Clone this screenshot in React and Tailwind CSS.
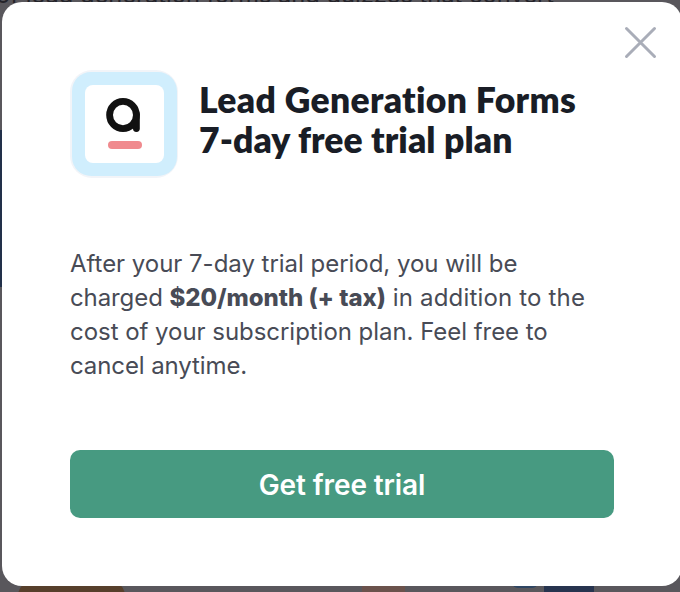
import React from 'react'

function AppLogo() {
  return (
    <svg className="w-[108px] h-[108px] shrink-0" viewBox="0 0 108 108" fill="none">
      <rect x="0" y="0" width="108" height="108" rx="22" fill="#f2f4f8" />
      <rect x="2" y="2" width="105" height="104" rx="19" fill="#d0eefd" />
      <rect x="15" y="15" width="79" height="78" rx="8" fill="#fff" />
      <ellipse cx="53" cy="45" rx="13.4" ry="13.6" stroke="#111" strokeWidth="6.8" />
      <path d="M66.4 44.5V58.6" stroke="#111" strokeWidth="6.8" strokeLinecap="round" />
      <rect x="38" y="71" width="34" height="8" rx="4" fill="#f08a8e" />
    </svg>
  )
}

function CloseButton() {
  return (
    <button aria-label="Close" className="cursor-pointer">
      <svg className="w-[33px] h-[33px]" viewBox="0 0 33 33" stroke="#a9adb8" strokeWidth="3" strokeLinecap="round">
        <path d="M2.5 2.5L30.5 30.5M30.5 2.5L2.5 30.5" />
      </svg>
    </button>
  )
}

// Dimmed page that stays behind the dialog
function Backdrop() {
  return (
    <div className="absolute inset-0 flex flex-col bg-[#59575c]">
      <p className="-mt-[19px] -ml-[4px] h-[28px] whitespace-nowrap text-[23.7px] leading-[28px] text-[#242329]">
        of lead generation forms and quizzes that convert
      </p>
      <div className="mt-[121px] w-[2px] h-[157px] bg-[#22304a]" />
      <div className="mt-auto flex h-[12px] pl-[18px]">
        <div className="w-[107px] h-[40px] rounded-t-[16px] bg-[#573f2b]" />
        <div className="ml-[237px] w-[43px] bg-[#6b524c]" />
        <div className="ml-[107px] w-[26px] h-[8px] rounded-b-[6px] bg-[#2f4663]" />
        <div className="ml-[6px] w-[50px] bg-[#27344f]" />
      </div>
    </div>
  )
}

export default function App() {
  return (
    <div className="relative w-[680px] h-[592px] overflow-hidden font-['Inter',sans-serif]">
      <Backdrop />
      <div className="relative ml-[2px] mt-[2px] w-[680px] h-[584px] pl-[68px] pr-[25px] pt-[24px] rounded-[20px] bg-white flex flex-col">
        <div className="flex justify-end items-start h-[44px]">
          <CloseButton />
        </div>
        <header className="flex gap-[21px] h-[108px]">
          <AppLogo />
          <h2 className="pt-[10px] font-['Lato',sans-serif] text-[35.5px] leading-[40px] font-extrabold text-[#191d26] whitespace-nowrap">
            <span className="block tracking-[0.32px]">Lead Generation Forms</span>
            <span className="block tracking-[0.08px]">7-day free trial plan</span>
          </h2>
        </header>
        <p className="mt-[69px] text-[24px] leading-[34px] text-[#484b56] whitespace-nowrap">
          <span className="tracking-[-0.03px]">After your 7-day trial period, you will be</span><br />
          <span className="tracking-[-0.1px]">charged </span>
          <strong className="font-extrabold tracking-[-0.04px]">$20/month (+ tax)</strong>
          <span className="tracking-[0.17px]"> in addition to the</span><br />
          <span className="tracking-[-0.04px]">cost of your subscription plan. Feel free to</span><br />
          <span className="tracking-[-0.1px]">cancel anytime.</span>
        </p>
        <button className="mt-[67px] w-[544px] h-[68px] shrink-0 rounded-[10px] bg-[#479a81] pt-[2px] text-[28px] tracking-[-0.1px] font-semibold text-white cursor-pointer">
          Get free trial
        </button>
      </div>
    </div>
  )
}
